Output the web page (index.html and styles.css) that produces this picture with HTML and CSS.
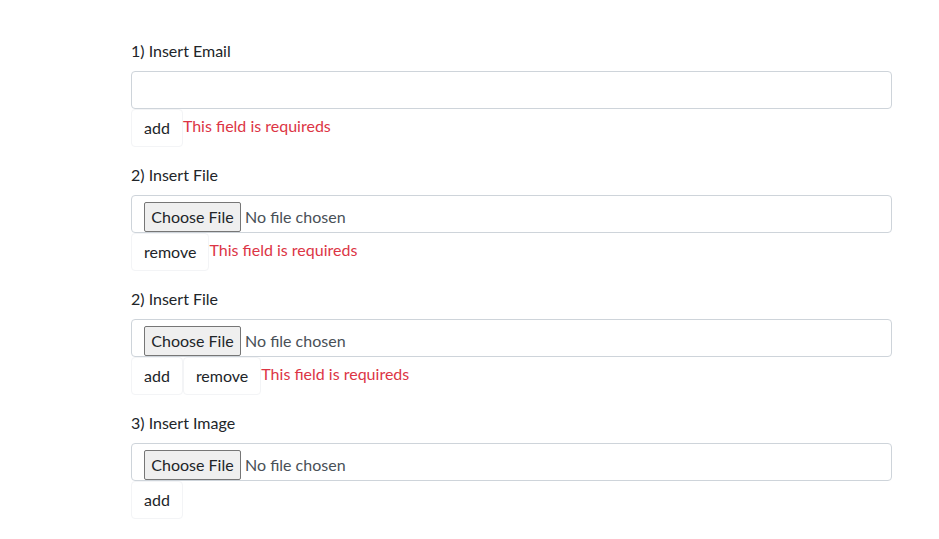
FILE: index.html
```html
<!DOCTYPE html>
<html>
<head>
<meta charset="utf-8">
<link rel="stylesheet" href="styles.css">
</head>
<body>
<div class="container">
  <div class="group">
    <label class="label">1) Insert Email</label>
    <input class="control" type="text">
    <div class="actions"><button class="btn">add</button><span class="error">This field is requireds</span></div>
  </div>
  <div class="group">
    <label class="label">2) Insert File</label>
    <div class="control file"><span class="file-btn">Choose File</span><span class="file-name">No file chosen</span></div>
    <div class="actions"><button class="btn">remove</button><span class="error">This field is requireds</span></div>
  </div>
  <div class="group">
    <label class="label">2) Insert File</label>
    <div class="control file"><span class="file-btn">Choose File</span><span class="file-name">No file chosen</span></div>
    <div class="actions"><button class="btn">add</button><button class="btn">remove</button><span class="error">This field is requireds</span></div>
  </div>
  <div class="group">
    <label class="label">3) Insert Image</label>
    <div class="control file"><span class="file-btn">Choose File</span><span class="file-name">No file chosen</span></div>
    <div class="actions"><button class="btn">add</button></div>
  </div>
</div>
</body>
</html>
```
FILE: styles.css
```css
html, body {
  margin: 0;
  padding: 0;
  background: #fff;
}
body {
  font-family: "Lato", "Noto Sans", sans-serif;
  font-size: 16px;
  line-height: 24px;
  color: #212529;
}
.container {
  width: 761px;
  margin-left: 131px;
  padding-top: 39px;
}
.group {
  margin-bottom: 16px;
}
.label {
  display: block;
  margin-bottom: 8px;
}
.control {
  display: block;
  box-sizing: border-box;
  width: 100%;
  height: 38px;
  margin: 0;
  padding: 6px 12px;
  border: 1px solid #ced4da;
  border-radius: 4px;
  font: inherit;
  color: #495057;
  background: #fff;
}
.file {
  display: flex;
  align-items: flex-start;
  padding: 6px 12px 0;
}
.file-btn {
  box-sizing: border-box;
  width: 97px;
  height: 30px;
  padding: 2px 0;
  text-align: center;
  margin-right: 4px;
  border: 1px solid #767676;
  border-radius: 2px;
  background: #efefef;
  color: #212529;
  line-height: 24px;
}
.file-name {
  line-height: 30px;
  color: #495057;
}
.actions {
  display: block;
}
.btn {
  display: inline-block;
  vertical-align: middle;
  box-sizing: border-box;
  height: 38px;
  padding: 6px 12px;
  border: 1px solid #f3f4f6;
  border-radius: 4px;
  background: #fff;
  font: inherit;
  color: #212529;
  line-height: 24px;
}
.error {
  color: #dc3545;
}
```
